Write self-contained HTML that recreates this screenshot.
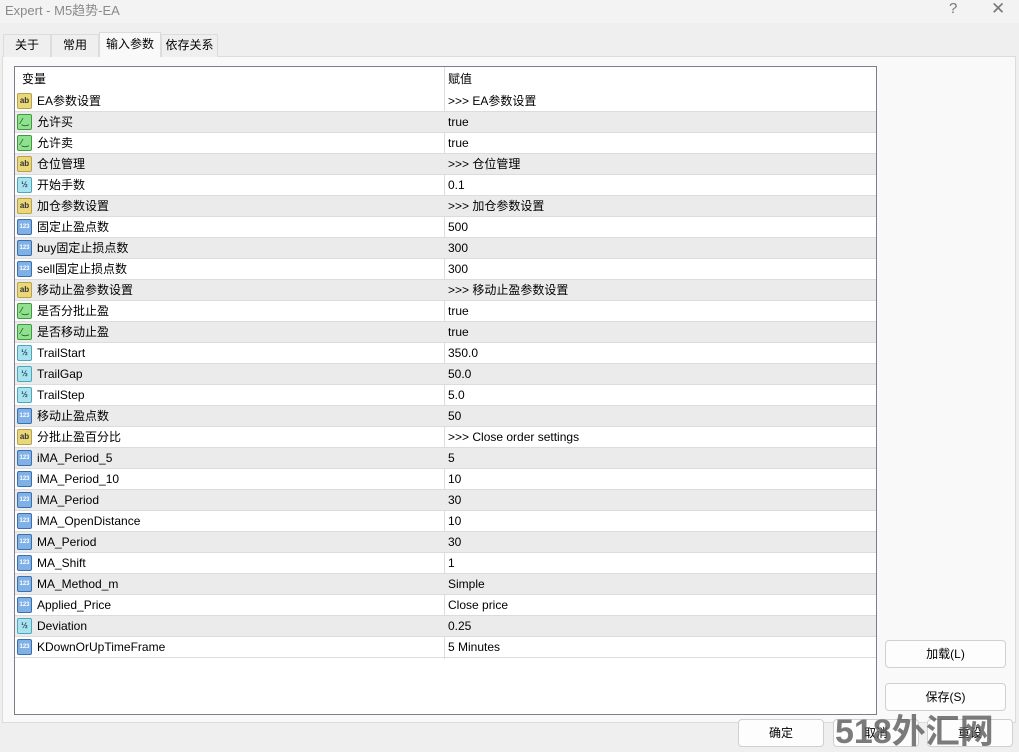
<!DOCTYPE html>
<html><head><meta charset="utf-8"><style>
*{margin:0;padding:0;box-sizing:border-box}
html,body{width:1019px;height:752px;overflow:hidden}
body{background:#efefef;font-family:"Liberation Sans","Noto Sans CJK SC",sans-serif;font-size:12px;color:#000;position:relative}
.title{position:absolute;left:0;top:0;width:1019px;height:23px;background:#f3f3f3;color:#8a8a8a;font-size:13px;line-height:22px;padding-left:5px}
.tb{position:absolute;top:0;color:#777;font-size:15px;line-height:18px}
.tab{position:absolute;top:34px;height:23px;border:1px solid #dcdcdc;border-bottom:none;background:#efefef;line-height:21px;text-align:center}
.panel{position:absolute;left:2px;top:56px;width:1014px;height:667px;background:#f9f9f9;border:1px solid #dcdcdc}
.table{position:absolute;left:14px;top:66px;width:863px;height:649px;background:#fff;border:1px solid #7a7f8a;overflow:hidden}
.row{position:absolute;left:0;width:861px;height:21px;border-bottom:1px solid #dcdcdc}
.row.g{background:#ebebeb}
.row span{position:absolute;top:0;line-height:20px;height:20px}
.n{left:22px}.v{left:433px}
.ic{position:absolute;left:2px;top:2px;width:15px;height:16px;border-radius:2px;font-size:8px;line-height:14px;text-align:center;font-weight:bold}
.ab{background:#ead77a;border:1px solid #b8a24a;color:#333}
.bo{background:#8fe08f;border:1px solid #3f9b3f;color:#1a5a1a}
.db{background:#a9e3ee;border:1px solid #4aa7bd;color:#246}
.it{background:#7fb0e6;border:1px solid #3a6fb0;color:#fff;font-size:6px}
.btn{position:absolute;background:#fdfdfd;border:1px solid #d0d0d0;border-radius:4px;text-align:center;line-height:26px;font-size:12px}
.col{position:absolute;left:429px;top:0;width:1px;height:592px;background:#dcdcdc}
</style></head><body>
<div class="title">Expert - M5趋势-EA</div>
<div class="tb" style="left:949px;top:0">?</div>
<div class="tb" style="left:991px;top:0;font-size:17px">✕</div>
<div class="panel"></div>
<div class="tab" style="left:3px;width:48px">关于</div>
<div class="tab" style="left:51px;width:48px">常用</div>
<div class="tab" style="left:99px;top:32px;height:25px;width:62px;background:#f9f9f9;line-height:22px">输入参数</div>
<div class="tab" style="left:161px;width:57px">依存关系</div>
<div class="table">
<div class="col"></div>
<div class="row" style="top:0;height:24px;border-bottom:none"><span class="n" style="left:7px;top:2px">变量</span><span class="v" style="top:2px">赋值</span></div>
<div class="row" style="top:24px"><div class="ic ab">ab</div><span class="n">EA参数设置</span><span class="v">&gt;&gt;&gt; EA参数设置</span></div>
<div class="row g" style="top:45px"><div class="ic bo">⁄‿</div><span class="n">允许买</span><span class="v">true</span></div>
<div class="row" style="top:66px"><div class="ic bo">⁄‿</div><span class="n">允许卖</span><span class="v">true</span></div>
<div class="row g" style="top:87px"><div class="ic ab">ab</div><span class="n">仓位管理</span><span class="v">&gt;&gt;&gt; 仓位管理</span></div>
<div class="row" style="top:108px"><div class="ic db">½</div><span class="n">开始手数</span><span class="v">0.1</span></div>
<div class="row g" style="top:129px"><div class="ic ab">ab</div><span class="n">加仓参数设置</span><span class="v">&gt;&gt;&gt; 加仓参数设置</span></div>
<div class="row" style="top:150px"><div class="ic it">123</div><span class="n">固定止盈点数</span><span class="v">500</span></div>
<div class="row g" style="top:171px"><div class="ic it">123</div><span class="n">buy固定止损点数</span><span class="v">300</span></div>
<div class="row" style="top:192px"><div class="ic it">123</div><span class="n">sell固定止损点数</span><span class="v">300</span></div>
<div class="row g" style="top:213px"><div class="ic ab">ab</div><span class="n">移动止盈参数设置</span><span class="v">&gt;&gt;&gt; 移动止盈参数设置</span></div>
<div class="row" style="top:234px"><div class="ic bo">⁄‿</div><span class="n">是否分批止盈</span><span class="v">true</span></div>
<div class="row g" style="top:255px"><div class="ic bo">⁄‿</div><span class="n">是否移动止盈</span><span class="v">true</span></div>
<div class="row" style="top:276px"><div class="ic db">½</div><span class="n">TrailStart</span><span class="v">350.0</span></div>
<div class="row g" style="top:297px"><div class="ic db">½</div><span class="n">TrailGap</span><span class="v">50.0</span></div>
<div class="row" style="top:318px"><div class="ic db">½</div><span class="n">TrailStep</span><span class="v">5.0</span></div>
<div class="row g" style="top:339px"><div class="ic it">123</div><span class="n">移动止盈点数</span><span class="v">50</span></div>
<div class="row" style="top:360px"><div class="ic ab">ab</div><span class="n">分批止盈百分比</span><span class="v">&gt;&gt;&gt; Close order settings</span></div>
<div class="row g" style="top:381px"><div class="ic it">123</div><span class="n">iMA_Period_5</span><span class="v">5</span></div>
<div class="row" style="top:402px"><div class="ic it">123</div><span class="n">iMA_Period_10</span><span class="v">10</span></div>
<div class="row g" style="top:423px"><div class="ic it">123</div><span class="n">iMA_Period</span><span class="v">30</span></div>
<div class="row" style="top:444px"><div class="ic it">123</div><span class="n">iMA_OpenDistance</span><span class="v">10</span></div>
<div class="row g" style="top:465px"><div class="ic it">123</div><span class="n">MA_Period</span><span class="v">30</span></div>
<div class="row" style="top:486px"><div class="ic it">123</div><span class="n">MA_Shift</span><span class="v">1</span></div>
<div class="row g" style="top:507px"><div class="ic it">123</div><span class="n">MA_Method_m</span><span class="v">Simple</span></div>
<div class="row" style="top:528px"><div class="ic it">123</div><span class="n">Applied_Price</span><span class="v">Close price</span></div>
<div class="row g" style="top:549px"><div class="ic db">½</div><span class="n">Deviation</span><span class="v">0.25</span></div>
<div class="row" style="top:570px"><div class="ic it">123</div><span class="n">KDownOrUpTimeFrame</span><span class="v">5 Minutes</span></div>
</div>
<div class="btn" style="left:885px;top:640px;width:121px;height:28px">加载(L)</div>
<div class="btn" style="left:885px;top:683px;width:121px;height:28px">保存(S)</div>
<div class="btn" style="left:738px;top:719px;width:86px;height:28px">确定</div>
<div class="btn" style="left:833px;top:719px;width:86px;height:28px">取消</div>
<div class="btn" style="left:927px;top:719px;width:86px;height:28px">重设</div>
<div style="position:absolute;left:835px;top:714px;height:36px;line-height:36px;font-size:34px;font-weight:bold;color:rgba(90,90,90,0.8);white-space:nowrap;overflow:hidden">518外汇网</div>
</body></html>
